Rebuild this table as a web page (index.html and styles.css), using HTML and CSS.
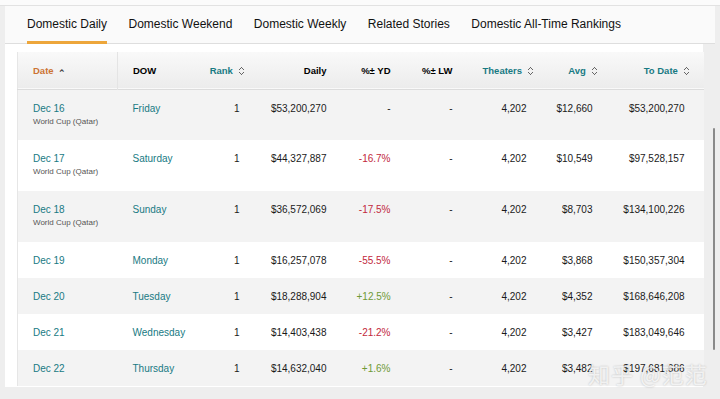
FILE: index.html
```html
<!DOCTYPE html>
<html lang="en">

<head>
    <meta charset="UTF-8">
    <meta name="viewport" content="width=device-width, initial-scale=1.0">
    <title>Domestic Daily</title>
    <link rel="stylesheet" href="styles.css">
</head>

<body>
    <div class="top-strip"></div>
    <div class="page">
        <!-- Tabs -->
        <div class="tabs">
            <div class="tab active">Domestic Daily</div>
            <div class="tab">Domestic Weekend</div>
            <div class="tab">Domestic Weekly</div>
            <div class="tab">Related Stories</div>
            <div class="tab">Domestic All-Time Rankings</div>
        </div>

        <div class="content">
            <table class="grosses">
                <colgroup>
                    <col style="width: 100px">
                    <col style="width: 73px">
                    <col style="width: 64px">
                    <col style="width: 87px">
                    <col style="width: 64px">
                    <col style="width: 62px">
                    <col style="width: 74px">
                    <col style="width: 66px">
                    <col style="width: 96px">
                </colgroup>
                <thead>
                    <tr>
                        <th class="left sorted first">Date <span class="caret">&#8963;</span></th>
                        <th class="left">DOW</th>
                        <th class="sort">Rank <span class="updown"></span></th>
                        <th>Daily</th>
                        <th>%± YD</th>
                        <th>%± LW</th>
                        <th class="sort">Theaters <span class="updown"></span></th>
                        <th class="sort">Avg <span class="updown"></span></th>
                        <th class="sort">To Date <span class="updown"></span></th>
                    </tr>
                </thead>
                <tbody>
                    <tr class="tall">
                        <td class="left"><a href="#">Dec 16</a><div class="note">World Cup (Qatar)</div></td>
                        <td class="left"><a href="#">Friday</a></td>
                        <td>1</td>
                        <td>$53,200,270</td>
                        <td>-</td>
                        <td>-</td>
                        <td>4,202</td>
                        <td>$12,660</td>
                        <td>$53,200,270</td>
                    </tr>
                    <tr class="tall">
                        <td class="left"><a href="#">Dec 17</a><div class="note">World Cup (Qatar)</div></td>
                        <td class="left"><a href="#">Saturday</a></td>
                        <td>1</td>
                        <td>$44,327,887</td>
                        <td class="down">-16.7%</td>
                        <td>-</td>
                        <td>4,202</td>
                        <td>$10,549</td>
                        <td>$97,528,157</td>
                    </tr>
                    <tr class="tall">
                        <td class="left"><a href="#">Dec 18</a><div class="note">World Cup (Qatar)</div></td>
                        <td class="left"><a href="#">Sunday</a></td>
                        <td>1</td>
                        <td>$36,572,069</td>
                        <td class="down">-17.5%</td>
                        <td>-</td>
                        <td>4,202</td>
                        <td>$8,703</td>
                        <td>$134,100,226</td>
                    </tr>
                    <tr>
                        <td class="left"><a href="#">Dec 19</a></td>
                        <td class="left"><a href="#">Monday</a></td>
                        <td>1</td>
                        <td>$16,257,078</td>
                        <td class="down">-55.5%</td>
                        <td>-</td>
                        <td>4,202</td>
                        <td>$3,868</td>
                        <td>$150,357,304</td>
                    </tr>
                    <tr>
                        <td class="left"><a href="#">Dec 20</a></td>
                        <td class="left"><a href="#">Tuesday</a></td>
                        <td>1</td>
                        <td>$18,288,904</td>
                        <td class="up">+12.5%</td>
                        <td>-</td>
                        <td>4,202</td>
                        <td>$4,352</td>
                        <td>$168,646,208</td>
                    </tr>
                    <tr>
                        <td class="left"><a href="#">Dec 21</a></td>
                        <td class="left"><a href="#">Wednesday</a></td>
                        <td>1</td>
                        <td>$14,403,438</td>
                        <td class="down">-21.2%</td>
                        <td>-</td>
                        <td>4,202</td>
                        <td>$3,427</td>
                        <td>$183,049,646</td>
                    </tr>
                    <tr>
                        <td class="left"><a href="#">Dec 22</a></td>
                        <td class="left"><a href="#">Thursday</a></td>
                        <td>1</td>
                        <td>$14,632,040</td>
                        <td class="up">+1.6%</td>
                        <td>-</td>
                        <td>4,202</td>
                        <td>$3,482</td>
                        <td>$197,681,686</td>
                    </tr>
                </tbody>
            </table>
        </div>
        <div class="scroll-thumb"></div>
    </div>
    <div class="watermark">知乎 @范范</div>
</body>

</html>
```

FILE: styles.css
```css
body {
    margin: 0;
    background-color: #eeeeee;
    font-family: "Liberation Sans", Arial, sans-serif;
    color: #111;
    height: 399px;
    overflow: hidden;
    position: relative;
}

.top-strip {
    height: 5px;
    background: #fbfbfb;
    border-bottom: 1px solid #e2e2e2;
}

.page {
    position: relative;
    margin-left: 5px;
    width: 710px;
    height: 381px;
    overflow: hidden;
}

/* Tab styling */
.tabs {
    display: flex;
    gap: 21.5px;
    height: 37px;
    padding: 0 22px;
    background: #fafafa;
    border-bottom: 1px solid #dedede;
}

.tab {
    position: relative;
    font-size: 12px;
    line-height: 37px;
    color: #111;
    white-space: nowrap;
}

.tab.active::after {
    content: "";
    position: absolute;
    left: 0;
    right: 0;
    bottom: -1px;
    height: 3px;
    background: #eda63b;
}

.content {
    width: 698px;
    height: 343px;
    background: #ffffff;
    padding: 8px 0 0 12px;
    box-sizing: border-box;
}

.grosses {
    width: 686px;
    table-layout: fixed;
    border-collapse: collapse;
    font-size: 10px;
    border-left: 1px solid #e6e6e6;
}

th,
td {
    padding: 0 15px;
    text-align: right;
    white-space: nowrap;
}

th:last-child,
td:last-child {
    padding-right: 19px;
}

.left {
    text-align: left;
}

thead tr {
    height: 37px;
    background: linear-gradient(#f9f9f9, #ececec);
    border-bottom: 1px solid #dcdcdc;
}

th {
    font-weight: bold;
    font-size: 9.5px;
    color: #000;
}

th.first {
    border-right: 1px solid #e4e4e4;
}

th.sorted {
    color: #cc7434;
}

th.sort {
    color: #187a83;
}

.caret {
    display: inline-block;
    color: #444;
    font-size: 9px;
    margin-left: 2px;
    transform: translateY(2px);
}

.updown {
    display: inline-block;
    width: 5px;
    height: 8px;
    margin-left: 3px;
    margin-right: -4px;
    vertical-align: -1px;
    background:
        linear-gradient(135deg, transparent 45%, #666 45%, #666 60%, transparent 60%) left top / 3px 3px no-repeat,
        linear-gradient(225deg, transparent 45%, #666 45%, #666 60%, transparent 60%) right top / 3px 3px no-repeat,
        linear-gradient(45deg, transparent 45%, #666 45%, #666 60%, transparent 60%) left bottom / 3px 3px no-repeat,
        linear-gradient(315deg, transparent 45%, #666 45%, #666 60%, transparent 60%) right bottom / 3px 3px no-repeat;
}

tbody tr {
    height: 36px;
}

tbody tr.tall {
    height: 51px;
}

tbody tr:nth-child(odd) {
    background: #f3f3f3;
}

tbody tr:nth-child(even) {
    background: #ffffff;
}

td {
    color: #1a1a1a;
    vertical-align: middle;
}

tr.tall td {
    vertical-align: top;
    padding-top: 13px;
}

a {
    color: #187a83;
    text-decoration: none;
}

.note {
    margin-top: 3px;
    font-size: 8px;
    color: #555;
}

.down {
    color: #c2283c;
}

.up {
    color: #6f9a36;
}

.scroll-thumb {
    position: absolute;
    right: 0;
    top: 122px;
    width: 2px;
    height: 222px;
    background: #8a8a8a;
    border-radius: 1px;
}

.watermark {
    position: absolute;
    left: 588px;
    top: 357px;
    font-family: "Noto Sans CJK SC", sans-serif;
    font-size: 22px;
    color: rgba(255, 255, 255, 0.75);
    text-shadow: 0 0 2px rgba(0, 0, 0, 0.25);
    letter-spacing: 1px;
}
```
